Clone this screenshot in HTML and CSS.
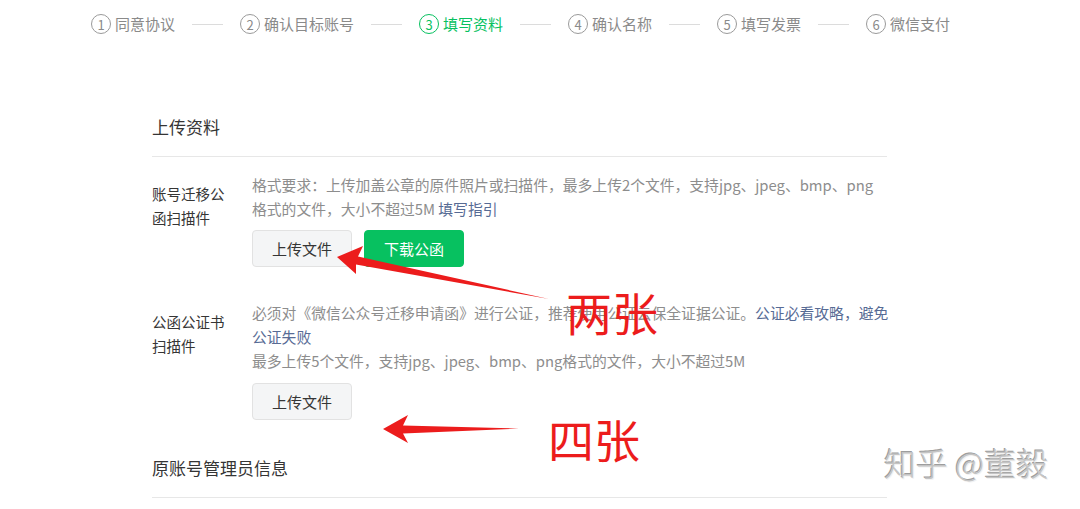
FILE: index.html
```html
<!DOCTYPE html>
<html lang="zh-CN">
<head>
  <meta charset="UTF-8">
  <title>填写资料</title>
  <link rel="stylesheet" href="styles.css">
</head>
<body>
  <div class="page">
    <div class="steps">
      <div class="step"><span class="step-num">1</span><span class="step-name">同意协议</span></div>
      <div class="step-line"></div>
      <div class="step"><span class="step-num">2</span><span class="step-name">确认目标账号</span></div>
      <div class="step-line"></div>
      <div class="step step-active"><span class="step-num">3</span><span class="step-name">填写资料</span></div>
      <div class="step-line"></div>
      <div class="step"><span class="step-num">4</span><span class="step-name">确认名称</span></div>
      <div class="step-line"></div>
      <div class="step"><span class="step-num">5</span><span class="step-name">填写发票</span></div>
      <div class="step-line"></div>
      <div class="step"><span class="step-num">6</span><span class="step-name">微信支付</span></div>
    </div>

    <div class="main">
      <h2 class="section-title">上传资料</h2>
      <div class="section-body">
        <div class="form-row">
          <div class="form-label">账号迁移公函扫描件</div>
          <div class="form-field">
            <p class="tips">格式要求：上传加盖公章的原件照片或扫描件，最多上传2个文件，支持jpg、jpeg、bmp、png格式的文件，大小不超过5M <a class="link">填写指引</a></p>
            <div class="btns">
              <button class="btn">上传文件</button>
              <button class="btn btn-primary">下载公函</button>
            </div>
          </div>
        </div>

        <div class="form-row form-row-next">
          <div class="form-label">公函公证书扫描件</div>
          <div class="form-field">
            <p class="tips tips-wide">必须对《微信公众号迁移申请函》进行公证，推荐使用公证云保全证据公证。<a class="link">公证必看攻略，避免公证失败</a></p>
            <p class="tips">最多上传5个文件，支持jpg、jpeg、bmp、png格式的文件，大小不超过5M</p>
            <div class="btns btns-low">
              <button class="btn">上传文件</button>
            </div>
          </div>
        </div>
      </div>

      <h2 class="section-title section-title-next">原账号管理员信息</h2>
    </div>

    <!-- 标注 -->
    <svg class="marks" width="1080" height="509" viewBox="0 0 1080 509">
      <polygon fill="#ec1c1c" points="337,257 363,246 358,256.5 549,299 356,264.5 356,274"/>
      <polygon fill="#ec1c1c" points="383,429 408,415 403,425.5 519,428.5 403,433.5 408,443"/>
    </svg>
    <div class="note note-two">两张</div>
    <div class="note note-four">四张</div>
    <div class="watermark">知乎 @董毅</div>
  </div>
</body>
</html>
```

FILE: styles.css
```css
body {
  margin: 0;
  background-color: #FFFFFF;
  font-family: "Noto Sans CJK SC", "Noto Sans", sans-serif;
  color: #353535;
}
.page {
  position: relative;
  width: 1080px;
  height: 509px;
  overflow: hidden;
}
.steps {
  display: flex;
  align-items: center;
  height: 48px;
  padding-left: 91px;
}
.step {
  display: flex;
  align-items: center;
  color: #8a8a8a;
  font-size: 15px;
}
.step-num {
  display: flex;
  align-items: center;
  justify-content: center;
  width: 18px;
  height: 18px;
  border: 1px solid #9a9a9a;
  border-radius: 50%;
  font-size: 13px;
  line-height: 1;
  margin-right: 4px;
}
.step-name {
  line-height: 20px;
}
.step-active {
  color: #07c160;
}
.step-active .step-num {
  border-color: #07c160;
}
.step-line {
  width: 31px;
  height: 1px;
  background-color: #dcdcdc;
  margin: 0 17px;
}
.main {
  width: 735px;
  margin-left: 152px;
  padding-top: 67px;
}
.section-title {
  margin: 0;
  font-size: 17px;
  font-weight: normal;
  line-height: 24px;
  padding-bottom: 17px;
  border-bottom: 1px solid #e7e7e7;
}
.section-title-next {
  margin-top: 36px;
}
.section-body {
  padding-top: 16px;
}
.form-row {
  display: flex;
}
.form-row-next {
  margin-top: 34px;
}
.form-label {
  width: 76px;
  margin-right: 24px;
  padding-top: 9px;
  font-size: 14.5px;
  line-height: 24px;
}
.form-field {
  flex: 1;
}
.tips {
  margin: 0;
  font-size: 14.8px;
  line-height: 24px;
  color: #8d8d8d;
}
.tips-wide {
  margin-right: -12px;
}
.link {
  color: #576b95;
}
.btns {
  display: flex;
  gap: 12px;
  margin-top: 9px;
}
.btns-low {
  margin-top: 10px;
}
.btn {
  width: 100px;
  height: 37px;
  border: 1px solid #e2e2e2;
  border-radius: 4px;
  background-color: #f4f5f6;
  color: #353535;
  font-family: inherit;
  font-size: 15px;
  padding: 0;
}
.btn-primary {
  background-color: #07c160;
  border-color: #07c160;
  color: #FFFFFF;
}
.marks {
  position: absolute;
  left: 0;
  top: 0;
}
.note {
  position: absolute;
  font-size: 46px;
  line-height: 1;
  color: #ec1c1c;
}
.note-two {
  left: 566px;
  top: 288px;
}
.note-four {
  left: 548px;
  top: 415px;
}
.watermark {
  position: absolute;
  left: 884px;
  top: 443px;
  font-size: 32px;
  font-weight: 300;
  line-height: 1.2;
  color: #c4c4c4;
  text-shadow: 1px 1px 0 #f2f2f2, -1px -1px 0 #9d9d9d;
}
```
